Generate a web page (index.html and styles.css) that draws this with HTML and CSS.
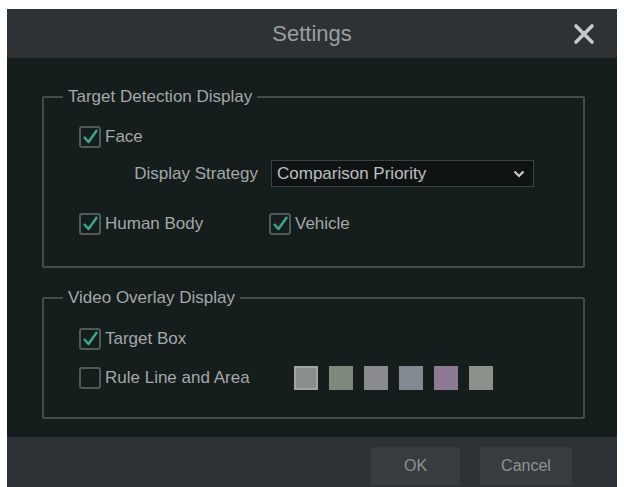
FILE: index.html
```html
<!DOCTYPE html>
<html lang="en">
<head>
    <meta charset="UTF-8">
    <title>Settings</title>
    <link rel="stylesheet" href="styles.css">
</head>
<body>
    <div class="dialog">
        <div class="dialog-header">
            <span class="dialog-title">Settings</span>
            <svg class="close-btn" width="22" height="22" viewBox="0 0 22 22">
                <path d="M3 3 L19 19 M19 3 L3 19" stroke="#c6c9cb" stroke-width="3.6" stroke-linecap="round" fill="none"/>
            </svg>
        </div>

        <div class="dialog-body">
            <!-- Target detection -->
            <fieldset class="group group-target">
                <legend>Target Detection Display</legend>
                <div class="row row-face">
                    <label class="check">
                        <svg class="box" width="22" height="22" viewBox="0 0 22 22"><rect x="1" y="1" width="20" height="20" rx="2" class="box-frame"/><path d="M5 11 L9.5 16 L18 4" class="tick"/></svg>
                        Face
                    </label>
                </div>
                <div class="row row-strategy">
                    <span class="strategy-label">Display Strategy</span>
                    <div class="select">
                        <span>Comparison Priority</span>
                        <svg width="12" height="8" viewBox="0 0 12 8"><path d="M1.5 1.5 L6 6 L10.5 1.5" stroke="#c8cbcb" stroke-width="2.2" fill="none"/></svg>
                    </div>
                </div>
                <div class="row row-types">
                    <label class="check check-wide">
                        <svg class="box" width="22" height="22" viewBox="0 0 22 22"><rect x="1" y="1" width="20" height="20" rx="2" class="box-frame"/><path d="M5 11 L9.5 16 L18 4" class="tick"/></svg>
                        Human Body
                    </label>
                    <label class="check">
                        <svg class="box" width="22" height="22" viewBox="0 0 22 22"><rect x="1" y="1" width="20" height="20" rx="2" class="box-frame"/><path d="M5 11 L9.5 16 L18 4" class="tick"/></svg>
                        Vehicle
                    </label>
                </div>
            </fieldset>

            <!-- Video overlay -->
            <fieldset class="group group-overlay">
                <legend>Video Overlay Display</legend>
                <div class="row row-box">
                    <label class="check">
                        <svg class="box" width="22" height="22" viewBox="0 0 22 22"><rect x="1" y="1" width="20" height="20" rx="2" class="box-frame"/><path d="M5 11 L9.5 16 L18 4" class="tick"/></svg>
                        Target Box
                    </label>
                </div>
                <div class="row row-rule">
                    <label class="check check-rule">
                        <svg class="box" width="22" height="22" viewBox="0 0 22 22"><rect x="1" y="1" width="20" height="20" rx="2" class="box-frame"/></svg>
                        Rule Line and Area
                    </label>
                    <div class="swatches">
                        <span class="swatch swatch-1"></span>
                        <span class="swatch swatch-2"></span>
                        <span class="swatch swatch-3"></span>
                        <span class="swatch swatch-4"></span>
                        <span class="swatch swatch-5"></span>
                        <span class="swatch swatch-6"></span>
                    </div>
                </div>
            </fieldset>
        </div>

        <div class="dialog-footer">
            <button class="btn">OK</button>
            <button class="btn">Cancel</button>
        </div>
    </div>
</body>
</html>
```

FILE: styles.css
```css
body {
    margin: 0;
    background: #ffffff;
    font-family: "Liberation Sans", Arial, sans-serif;
}
.dialog {
    margin: 9px 7px 0 7px;
    width: 610px;
    height: 478px;
    background: #161d1d;
    display: flex;
    flex-direction: column;
    color: #a3a8a8;
    font-size: 17px;
}
.dialog-header {
    height: 49px;
    background: #2e3235;
    display: flex;
    align-items: center;
    justify-content: center;
    position: relative;
}
.dialog-title {
    font-size: 22px;
    color: #9a9ea0;
}
.close-btn {
    position: absolute;
    right: 22px;
    top: 14px;
}
.dialog-body {
    flex: 1;
    padding: 0 32px 0 35px;
}
.group {
    margin: 0;
    padding: 0 0 0 35px;
    border: 2px solid #434c4b;
    border-radius: 2px;
    min-width: 0;
    box-sizing: border-box;
}
.group legend {
    margin-left: -16px;
    padding: 0 5px;
    color: #a3a8a8;
    line-height: 17px;
}
.group-target {
    margin-top: 30px;
    height: 180px;
}
.group-overlay {
    margin-top: 21px;
    height: 130px;
}
.row {
    display: flex;
    align-items: center;
}
.row-face {
    margin-top: 21px;
    height: 22px;
}
.row-strategy {
    margin-top: 12px;
    height: 27px;
}
.row-types {
    margin-top: 26px;
    height: 22px;
}
.row-box {
    margin-top: 22px;
    height: 22px;
}
.row-rule {
    margin-top: 16px;
    height: 24px;
}
.check {
    display: flex;
    align-items: center;
    gap: 4px;
    color: #a3a8a8;
}
.check-wide {
    width: 190px;
}
.check-rule {
    width: 215px;
}
.box-frame {
    fill: none;
    stroke: #4f5a58;
    stroke-width: 2;
}
.tick {
    fill: none;
    stroke: #3aa98d;
    stroke-width: 2.4;
    stroke-linejoin: round;
}
.strategy-label {
    width: 179px;
    text-align: right;
    margin-right: 13px;
}
.select {
    width: 263px;
    height: 27px;
    box-sizing: border-box;
    background: #0e1212;
    border: 1px solid #3a4342;
    display: flex;
    align-items: center;
    justify-content: space-between;
    padding: 0 8px 0 5px;
    color: #bcc0c0;
}
.swatches {
    display: flex;
    gap: 11px;
}
.swatch {
    width: 24px;
    height: 24px;
    display: block;
    box-sizing: border-box;
}
.swatch-1 { background: #8a8f8d; border: 2px solid #a1a5a3; }
.swatch-2 { background: #7e887d; }
.swatch-3 { background: #898a8e; }
.swatch-4 { background: #828991; }
.swatch-5 { background: #8d7b93; }
.swatch-6 { background: #8c918c; }
.dialog-footer {
    height: 50px;
    background: #2e3236;
    display: flex;
    justify-content: flex-end;
    align-items: center;
    gap: 20px;
    padding-right: 45px;
}
.btn {
    width: 89px;
    height: 38px;
    margin-top: 8px;
    background: #383c3f;
    border: none;
    border-radius: 2px;
    color: #8e9193;
    font-family: "Liberation Sans", Arial, sans-serif;
    font-size: 16px;
}
.btn + .btn {
    width: 92px;
}
```
